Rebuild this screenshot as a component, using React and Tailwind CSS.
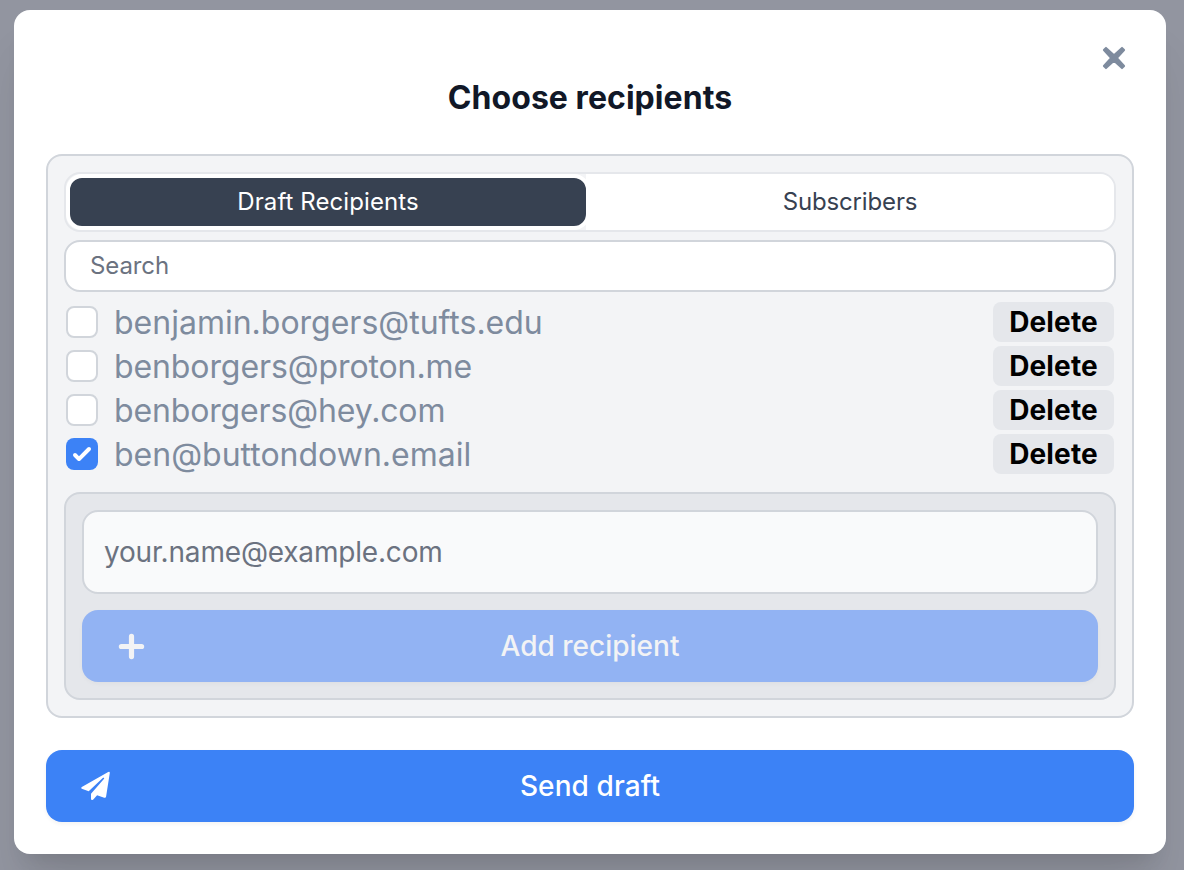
import React from "react";

const recipients = [
  { email: "benjamin.borgers@tufts.edu", checked: false, tracking: "tracking-normal" },
  { email: "benborgers@proton.me", checked: false, tracking: "tracking-[-0.1px]" },
  { email: "benborgers@hey.com", checked: false, tracking: "tracking-[-0.14px]" },
  { email: "ben@buttondown.email", checked: true, tracking: "tracking-normal" },
];

function CloseIcon() {
  return (
    <svg viewBox="0 0 32 32" className="size-8 text-[#7e8b9e]" fill="currentColor" stroke="currentColor">
      <path
        d="M8 5.9L16 13.2L24 5.9L26.1 8L18.8 16L26.1 24L24 26.1L16 18.8L8 26.1L5.9 24L13.2 16L5.9 8Z"
        strokeWidth="2"
        strokeLinejoin="round"
      />
    </svg>
  );
}

function PlusIcon() {
  return (
    <svg viewBox="0 0 28 28" className="ml-[3px] size-7" fill="none" stroke="currentColor">
      <path d="M14.5 4.4V24.6M4.4 14.5H24.6" strokeWidth="5.2" strokeLinecap="round" />
    </svg>
  );
}

function PlaneIcon() {
  return (
    <svg viewBox="0 0 32 32" className="ml-0.5 size-8" fill="currentColor">
      <path d="M28.2 1.9Q29.9 1.2 29.8 3L26.1 26.6Q25.8 28.3 24.2 27.7L17.1 25.2L13.3 29.5Q11.2 31 11 28.8V23.7L24.3 8.4L23.3 7.6L8.7 21.3L1.8 18.8Q0.4 17.9 1.8 16.9Z" />
    </svg>
  );
}

function Checkbox({ checked }) {
  if (!checked) {
    return <span className="size-8 shrink-0 rounded-lg border-2 border-[#d1d5db] bg-white" />;
  }
  return (
    <span className="size-8 shrink-0 rounded-lg bg-[#3c82f6]">
      <svg viewBox="0 0 16 16" fill="white" className="size-8">
        <path d="M12.207 4.793a1 1 0 010 1.414l-5 5a1 1 0 01-1.414 0l-2-2a1 1 0 011.414-1.414L6.5 9.086l4.293-4.293a1 1 0 011.414 0z" />
      </svg>
    </span>
  );
}

function Recipient({ email, checked, tracking }) {
  return (
    <li className="flex h-10 items-center px-0.5">
      <Checkbox checked={checked} />
      <span className={`ml-4 flex-1 pt-0.5 text-[32px] leading-10 text-[#7e8b9e] ${tracking}`}>{email}</span>
      <button className="h-10 w-[121px] rounded-lg bg-[#e5e7eb] text-center text-[28px] leading-10 font-bold tracking-[0.15px] text-black">
        Delete
      </button>
    </li>
  );
}

export default function App() {
  return (
    <div className="h-[870px] w-[1184px] overflow-hidden bg-[#9295a0] px-[14px] pt-[10px] font-['Inter',sans-serif] [font-optical-sizing:none]">
      <div className="h-[844px] w-[1152px] rounded-2xl bg-white px-8 shadow-[0_40px_50px_-10px_rgba(0,0,0,0.1),0_16px_20px_-12px_rgba(0,0,0,0.1)]">
        <div className="flex h-16 items-end justify-end pr-1">
          <CloseIcon />
        </div>
        <h1 className="h-20 pt-1 text-center text-[32px] leading-[40px] font-bold tracking-[0.05px] text-[#111827]">
          Choose recipients
        </h1>
        <section className="h-[564px] rounded-2xl border-2 border-[#d1d5db] bg-[#f3f4f6] p-4">
          <div className="flex h-[60px] rounded-2xl border-2 border-[#e5e7eb] text-2xl text-[#374151]">
            <button className="w-[524px] rounded-2xl border-4 border-white bg-[#374151] tracking-[0.08px] text-white">
              Draft Recipients
            </button>
            <button className="-ml-1 flex-1 rounded-r-[14px] bg-white tracking-[-0.15px]">Subscribers</button>
          </div>
          <div className="mt-2 flex h-[52px] items-center rounded-2xl border-2 border-[#d1d5db] bg-white px-6 text-2xl tracking-[-0.1px] text-[#6b7280]">
            Search
          </div>
          <ul className="mt-2.5 flex flex-col gap-1">
            {recipients.map((r) => (
              <Recipient key={r.email} {...r} />
            ))}
          </ul>
          <div className="mt-[18px] h-[208px] rounded-2xl border-2 border-[#d1d5db] bg-[#e5e7eb] p-4">
            <div className="flex h-[84px] items-center rounded-2xl border-2 border-[#d1d5db] bg-[#f9fafb] px-5 text-[28px] tracking-[-0.18px] text-[#6b7280]">
              your.name@example.com
            </div>
            <button className="mt-4 grid h-[72px] w-full grid-cols-[64px_1fr_64px] items-center rounded-2xl bg-[#92b3f3] px-8 text-[28px] font-medium text-[#f2f3f5] shadow-[0_2px_4px_rgba(0,0,0,0.03)]">
              <PlusIcon />
              <span>Add recipient</span>
            </button>
          </div>
        </section>
        <button className="mt-8 grid h-[72px] w-full grid-cols-[64px_1fr_64px] items-center rounded-2xl bg-[#3c82f6] px-8 text-[28px] font-medium tracking-[0.1px] text-white shadow-[0_2px_4px_rgba(0,0,0,0.05)]">
          <PlaneIcon />
          <span>Send draft</span>
        </button>
      </div>
    </div>
  );
}
